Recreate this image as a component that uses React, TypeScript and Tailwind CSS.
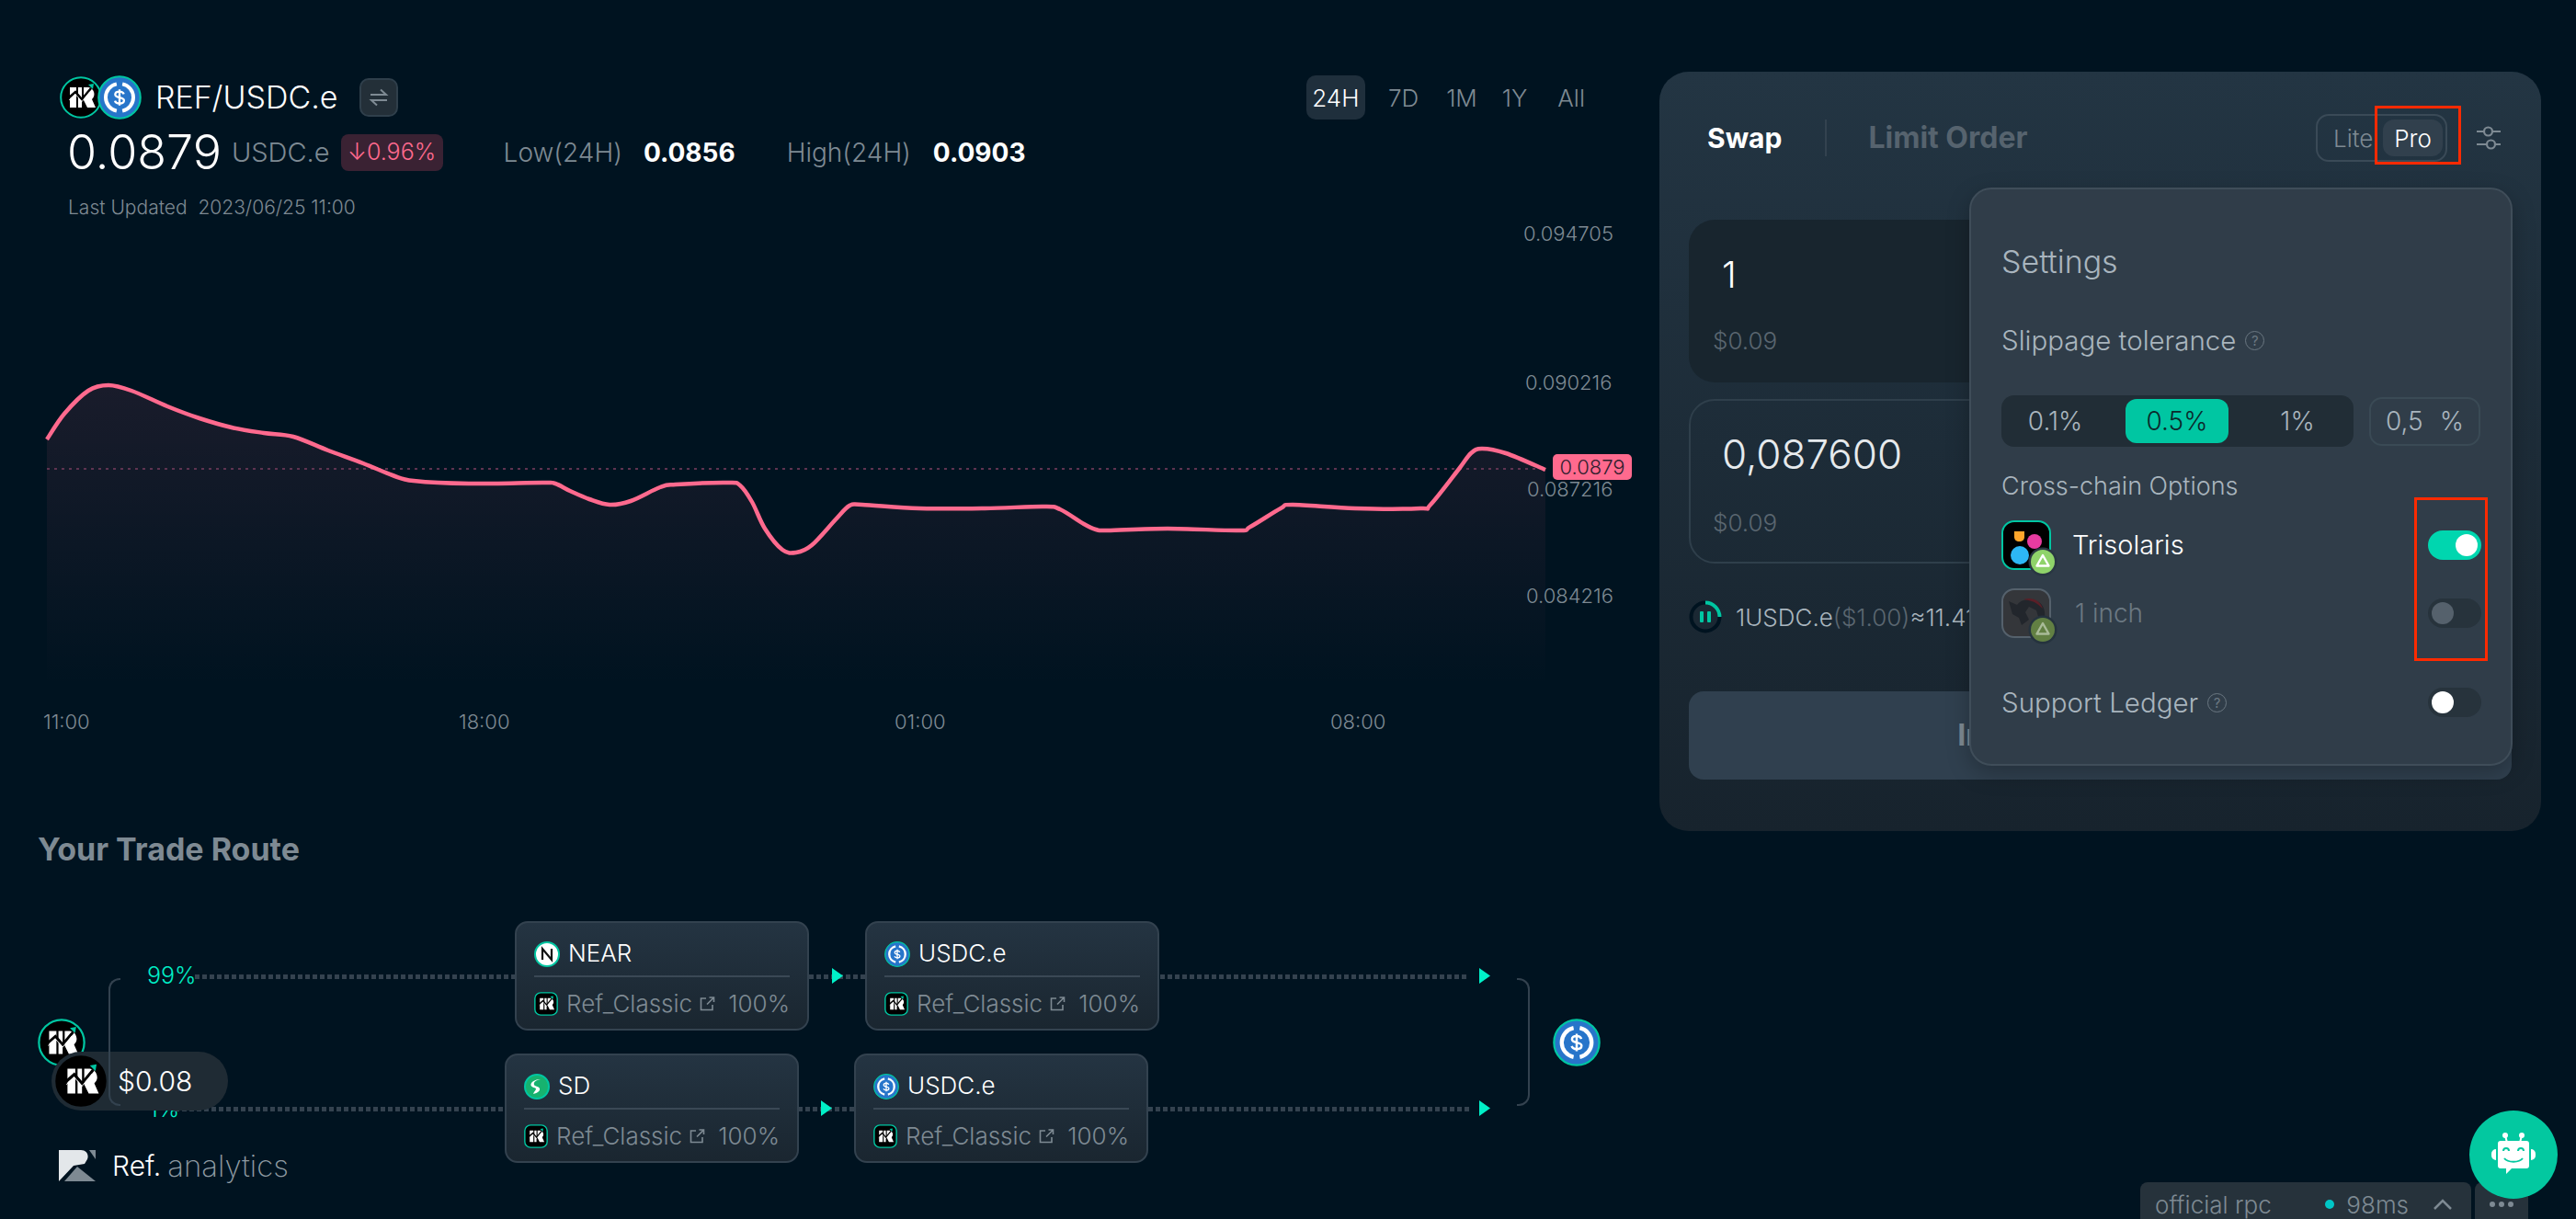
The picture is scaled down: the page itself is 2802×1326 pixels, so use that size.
import React from "react";

const pts: [number, number][] = [
  [51,478],[70,450],[96,425],[118,419],[143,425],[182,442],[217,455],[252,465],[287,471],[319,475],[357,490],[395,504],[427,517],[450,523],[510,526],[590,525],[604,526],[620,534],[641,543],[663,549],[686,545],[718,530],[735,527],[792,525],[805,528],[818,546],[832,575],[851,598],[866,601],[883,593],[909,565],[924,550],[938,549],[1000,553],[1071,553],[1135,551],[1153,554],[1179,570],[1192,576],[1205,577],[1270,575],[1347,577],[1360,573],[1393,553],[1406,549],[1474,553],[1545,553],[1556,549],[1587,510],[1600,493],[1612,488],[1638,493],[1681,511],
];
function smooth(p: [number, number][]) {
  let d = `M${p[0][0]} ${p[0][1]}`;
  for (let i = 0; i < p.length - 1; i++) {
    const a = p[Math.max(0, i - 1)], b = p[i], c = p[i + 1], e = p[Math.min(p.length - 1, i + 2)];
    const k = 1 / 6;
    d += ` C${(b[0] + (c[0] - a[0]) * k).toFixed(1)} ${(b[1] + (c[1] - a[1]) * k).toFixed(1)} ${(c[0] - (e[0] - b[0]) * k).toFixed(1)} ${(c[1] - (e[1] - b[1]) * k).toFixed(1)} ${c[0]} ${c[1]}`;
  }
  return d;
}
const linePath = smooth(pts);

function RefGlyph() {
  return (
    <>
      <path d="M11 12h7v22h-7z M20 12h4v22h-4z M26 12h5a7.5 7.5 0 0 1 4 13l4 9h-9l-4-8z" fill="#fff" />
      <path d="M8 25l9-8 7 8 10-12" fill="none" stroke="#000" strokeWidth="2.6" />
      <path d="M10 26l7-6.5 7 8 9-11" fill="none" stroke="#fff" strokeWidth="0.8" />
      <path d="M31 9l6-1-1 6z" fill="#00c6a2" />
    </>
  );
}
function RefIcon({ size, square, border = true }: { size: number; square?: boolean; border?: boolean }) {
  return (
    <svg width={size} height={size} viewBox="0 0 46 46" className="shrink-0">
      {square ? (
        <rect x="1.5" y="1.5" width="43" height="43" rx="11" fill="#000" stroke="#00c6a2" strokeWidth="2.5" />
      ) : (
        <circle cx="23" cy="23" r="21.8" fill="#000" stroke={border ? "#00c6a2" : "#000"} strokeWidth="2" />
      )}
      <RefGlyph />
    </svg>
  );
}
function UsdcIcon({ size }: { size: number }) {
  return (
    <svg width={size} height={size} viewBox="0 0 46 46" className="shrink-0">
      <circle cx="23" cy="23" r="21.8" fill="#2775ca" stroke="#00c6a2" strokeWidth="2" />
      <path d="M20 9A14.300 14.300 0 0 0 20 37M26 9A14.300 14.300 0 0 1 26 37" fill="none" stroke="#fff" strokeWidth="3.800" />
      <path d="M27.5 19.5c-.6-1.800-2.400-2.600-4.500-2.600-2.600 0-4.500 1.200-4.500 3.100 0 4.400 9.200 1.800 9.200 6.200 0 2-2 3.200-4.700 3.200-2.400 0-4.200-1-4.800-2.900 M23 14.500v17" fill="none" stroke="#fff" strokeWidth="2.200" />
    </svg>
  );
}
function NearIcon() {
  return (
    <svg width="28" height="28" viewBox="0 0 28 28" className="shrink-0">
      <circle cx="14" cy="14" r="13" fill="#fff" stroke="#00c6a2" strokeWidth="2" />
      <path d="M9 20V8l10 12V8" fill="none" stroke="#111" strokeWidth="2.200" />
    </svg>
  );
}
function SdIcon() {
  return (
    <svg width="28" height="28" viewBox="0 0 28 28" className="shrink-0">
      <circle cx="14" cy="14" r="13" fill="#17b26f" stroke="#00c6a2" strokeWidth="2" />
      <path d="M18 6c-5 1-8 3-7 6 .8 2 5 1.500 6 4 .8 2.500-2 5-7 6 1-3 3-4 3-5.500 0-1.500-5-1.500-5.500-4C7 9 12 6 18 6z" fill="#fff" />
    </svg>
  );
}
function ExtIcon() {
  return (
    <svg width="18" height="18" viewBox="0 0 18 18" fill="none" stroke="#7e8a93" strokeWidth="1.600" className="shrink-0">
      <path d="M8 3H2.500v12.500H15V10" />
      <path d="M9 9.500L16 2.500M11.500 2H16.500V7" />
    </svg>
  );
}
function HelpIcon() {
  return (
    <span className="flex h-[21px] w-[21px] items-center justify-center rounded-full border-[1.5px] border-[#6b7882] text-[15px] font-normal leading-none text-[#6b7882]">?</span>
  );
}
function Toggle({ on, muted }: { on?: boolean; muted?: boolean }) {
  return (
    <div className={`flex h-[32px] w-[58px] items-center rounded-full px-[4px] ${on ? "justify-end bg-[#00d6af]" : "justify-start bg-[#27333c]"}`}>
      <div className={`h-[24px] w-[24px] rounded-full ${muted ? "bg-[#55616c]" : "bg-white"}`} />
    </div>
  );
}
function Badge({ dim }: { dim?: boolean }) {
  return (
    <svg width="34" height="34" viewBox="0 0 34 34" className="absolute -bottom-[8px] -right-[8px]">
      <circle cx="17" cy="17" r="15.500" fill={dim ? "#25333e" : "#293742"} />
      <circle cx="17" cy="17" r="13" fill={dim ? "#628043" : "#8fd36a"} />
      <path d="M17 10l6.500 11.500h-13z" fill="none" stroke={dim ? "#a9bb98" : "#fff"} strokeWidth="2.400" strokeLinejoin="round" />
    </svg>
  );
}

function Node({ icon, name, left, top }: { icon: React.ReactNode; name: string; left: string; top: string }) {
  return (
    <div className={`absolute flex h-[119px] w-[320px] flex-col rounded-[14px] border-2 border-[#33424f] bg-gradient-to-b from-[#243442] to-[#1a2630] px-[19px] ${left} ${top}`}>
      <div className="flex h-[59px] items-end gap-[9px] border-b-2 border-[#3a4855] pb-[9px]">
        {icon}
        <span className="text-[26px] leading-[30px] text-white">{name}</span>
      </div>
      <div className="mt-[15px] flex items-center">
        <RefIcon size={26} square />
        <span className="ml-[9px] text-[26px] leading-[28px] text-[#7e8a93]">Ref_Classic</span>
        <span className="ml-auto mr-[14px]"><ExtIcon /></span>
        <span className="text-[26px] leading-[28px] text-[#7e8a93]">100%</span>
      </div>
    </div>
  );
}
function Dots({ cls }: { cls: string }) {
  return <div className={`absolute h-[5px] bg-[repeating-linear-gradient(90deg,#34424f_0_5px,transparent_5px_8px)] ${cls}`} />;
}
function Arrow({ cls }: { cls: string }) {
  return (
    <svg width="12" height="17" viewBox="0 0 12 17" className={`absolute ${cls}`}>
      <path d="M0 0l12 8.500L0 17z" fill="#00f0c8" />
    </svg>
  );
}

export default function App() {
  return (
    <div className="relative flex h-[1326px] w-[2802px] overflow-hidden bg-[#001320] font-[Inter,sans-serif] font-light">
      {/* left column */}
      <div className="flex w-[1805px] shrink-0 flex-col">
        <div className="pl-[65px] pr-[81px] pt-[82px]">
          <div className="flex h-[48px] items-center justify-between">
            <div className="flex items-center">
              <RefIcon size={46} />
              <div className="-ml-[5px]"><UsdcIcon size={48} /></div>
              <span className="ml-[15px] text-[34px] leading-none text-white">REF/USDC.e</span>
              <div className="ml-[24px] flex h-[42px] w-[42px] items-center justify-center rounded-[10px] border-2 border-[#2f3f4b] bg-[#232f38]">
                <svg width="22" height="22" viewBox="0 0 22 22" fill="none" stroke="#7e8a93" strokeWidth="2">
                  <path d="M2 8h17l-6-5.500M20 14H3l6 5.500" />
                </svg>
              </div>
            </div>
            <div className="flex items-center text-[26px] text-[#7e8a93]">
              <span className="flex h-[48px] w-[64px] items-center justify-center rounded-[10px] bg-[#1f2f3c] text-white">24H</span>
              <span className="ml-[25px]">7D</span>
              <span className="ml-[30px]">1M</span>
              <span className="ml-[27px]">1Y</span>
              <span className="ml-[33px]">All</span>
            </div>
          </div>
          <div className="mt-[16px] flex h-[40px] items-center pl-[8px]">
            <span className="text-[52px] leading-none text-white">0.0879</span>
            <span className="ml-[11px] text-[29px] text-[#7e8a93]">USDC.e</span>
            <span className="ml-[12px] flex h-[40px] w-[111px] items-center justify-center rounded-[8px] bg-[#3a2233] text-[25px] text-[#ff6a8e]">↓0.96%</span>
            <span className="ml-[66px] text-[28px] text-[#7e8a93]">Low(24H)</span>
            <span className="ml-[23px] text-[28px] font-bold text-white">0.0856</span>
            <span className="ml-[56px] text-[28px] text-[#7e8a93]">High(24H)</span>
            <span className="ml-[24px] text-[28px] font-bold text-white">0.0903</span>
          </div>
          <div className="mt-[26px] pl-[9px] text-[21px] leading-[28px] text-[#7e8a93]">Last Updated&nbsp; 2023/06/25 11:00</div>
        </div>

        {/* chart */}
        <div className="relative h-[580px] w-full">
          <svg width="1800" height="580" viewBox="0 240 1800 580" className="absolute left-0 top-0">
            <defs>
              <linearGradient id="area" x1="0" y1="0" x2="0" y2="1">
                <stop offset="0" stopColor="#ff6a8e" stopOpacity="0.1" />
                <stop offset="1" stopColor="#ff6a8e" stopOpacity="0" />
              </linearGradient>
            </defs>
            <path d={`${linePath} L1681 747 L51 747 Z`} fill="url(#area)" />
            <line x1="51" y1="510" x2="1681" y2="510" stroke="#5e3350" strokeWidth="2" strokeDasharray="3 5" />
            <path d={linePath} fill="none" stroke="#ff6a8e" strokeWidth="4.500" />
          </svg>
          <span className="absolute left-[1657px] top-[0px] text-[22px] leading-[28px] text-[#7e8a93]">0.094705</span>
          <span className="absolute left-[1659px] top-[162px] text-[22px] leading-[28px] text-[#7e8a93]">0.090216</span>
          <span className="absolute left-[1661px] top-[278px] text-[22px] leading-[28px] text-[#7e8a93]">0.087216</span>
          <span className="absolute left-[1660px] top-[394px] text-[22px] leading-[28px] text-[#7e8a93]">0.084216</span>
          <span className="absolute left-[1689px] top-[254px] flex h-[28px] w-[86px] items-center justify-center rounded-[5px] bg-[#ff6a8e] text-[22px] text-[#31202e]">0.0879</span>
          <span className="absolute left-[47px] top-[531px] text-[22px] leading-[28px] text-[#7e8a93]">11:00</span>
          <span className="absolute left-[499px] top-[531px] text-[22px] leading-[28px] text-[#7e8a93]">18:00</span>
          <span className="absolute left-[973px] top-[531px] text-[22px] leading-[28px] text-[#7e8a93]">01:00</span>
          <span className="absolute left-[1447px] top-[531px] text-[22px] leading-[28px] text-[#7e8a93]">08:00</span>
        </div>

        {/* route */}
        <div className="relative mt-[60px] flex-1">
          <div className="mt-[20px] pl-[41px] text-[34px] font-bold leading-[48px] text-[#7e8a93]">Your Trade Route</div>
          <span className="absolute left-[160px] top-[167px] text-[25px] leading-[28px] text-[#00f0c8]">99%</span>
          <span className="absolute left-[162px] top-[312px] text-[25px] leading-[28px] text-[#00f0c8]">1%</span>
          <Dots cls="left-[212px] top-[180px] w-[348px]" />
          <Dots cls="left-[880px] top-[180px] w-[61px]" />
          <Dots cls="left-[1262px] top-[180px] w-[336px]" />
          <Dots cls="left-[190px] top-[324px] w-[359px]" />
          <Dots cls="left-[868px] top-[324px] w-[61px]" />
          <Dots cls="left-[1249px] top-[324px] w-[349px]" />
          <Arrow cls="left-[905px] top-[173px]" />
          <Arrow cls="left-[1609px] top-[173px]" />
          <Arrow cls="left-[893px] top-[317px]" />
          <Arrow cls="left-[1609px] top-[317px]" />
          <Node left="left-[560px]" top="top-[122px]" icon={<NearIcon />} name="NEAR" />
          <Node left="left-[941px]" top="top-[122px]" icon={<UsdcIcon size={28} />} name="USDC.e" />
          <Node left="left-[549px]" top="top-[266px]" icon={<SdIcon />} name="SD" />
          <Node left="left-[929px]" top="top-[266px]" icon={<UsdcIcon size={28} />} name="USDC.e" />
          <div className="absolute left-[41px] top-[228px]"><RefIcon size={52} /></div>
          <div className="absolute left-[1689px] top-[228px]"><UsdcIcon size={52} /></div>
          <div className="absolute left-[1650px] top-[184px] h-[139px] w-[14px] rounded-r-[12px] border-y-2 border-r-2 border-[#33424f]" />
          {/* price pill */}
          <div className="absolute left-[56px] top-[264px] flex h-[64px] w-[192px] items-center rounded-full bg-[#1f2b34] pl-[4px]">
            <RefIcon size={56} border={false} />
            <span className="ml-[12px] text-[30px] text-white">$0.08</span>
          </div>
          <div className="absolute left-[118px] top-[184px] h-[139px] w-[13px] rounded-l-[12px] border-y-2 border-l-2 border-[#33424f]" />
          <div className="absolute left-[64px] top-[368px] flex items-center">
            <svg width="40" height="34" viewBox="0 0 40 34">
              <path d="M0 0h24c6 0 9 5 7 10l-3 5-12 2L0 34z" fill="#e3e7ea" />
              <path d="M6 34l14-16 20 16z" fill="#7e8a93" />
              <path d="M33 0h7v10z" fill="#7e8a93" />
            </svg>
            <span className="ml-[18px] text-[30px] leading-[40px] text-white">Ref.</span>
            <span className="ml-[7px] text-[33px] font-extralight leading-[40px] text-[#8f9ba3]">analytics</span>
          </div>
        </div>
      </div>

      {/* right column */}
      <div className="pt-[78px]">
        <div className="relative h-[826px] w-[959px] rounded-[32px] bg-gradient-to-b from-[#233543] to-[#17232d] px-[32px] pt-[46px]">
          <div className="flex h-[52px] items-center">
            <span className="ml-[20px] text-[30px] font-bold text-white">Swap</span>
            <span className="ml-[47px] h-[40px] w-[2px] bg-[#33424f]" />
            <span className="ml-[45px] text-[32px] font-bold text-[#56636e]">Limit Order</span>
            <div className="ml-auto flex h-[52px] w-[143px] items-center rounded-[14px] border-2 border-[#3a4a57] pl-[17px] pr-[3px]">
              <span className="text-[26px] text-[#7e8a93]">Lite</span>
              <span className="ml-auto flex h-[40px] w-[65px] items-center justify-center rounded-[12px] bg-[#31404d] text-[26px] text-white">Pro</span>
            </div>
            <svg width="28" height="26" viewBox="0 0 28 26" fill="none" stroke="#7e8a93" strokeWidth="2.200" className="ml-[31px] mr-[11px]">
              <path d="M1 6h8M18 6h9M1 20h11M21 20h6" />
              <circle cx="13.500" cy="6" r="4.500" />
              <circle cx="16.500" cy="20" r="4.500" />
            </svg>
          </div>

          <div className="mt-[63px] h-[177px] rounded-[28px] bg-[#18252e] pl-[26px] pt-[38px]">
            <div className="pl-[10px] text-[40px] leading-[44px] text-white">1</div>
            <div className="mt-[35px] text-[26px] leading-[30px] text-[#5a6670]">$0.09</div>
          </div>
          <div className="mt-[18px] h-[179px] rounded-[28px] border-2 border-[#2f3f4b] pl-[24px] pt-[33px]">
            <div className="pl-[10px] text-[44px] leading-[50px] text-[#e6eaed]">0,087600</div>
            <div className="mt-[35px] text-[26px] leading-[30px] text-[#5a6670]">$0.09</div>
          </div>
          <div className="mt-[40px] flex h-[36px] items-center text-[26px]">
            <svg width="36" height="36" viewBox="0 0 36 36" className="shrink-0">
              <circle cx="18" cy="18" r="15.500" fill="none" stroke="#001320" strokeWidth="4" />
              <path d="M18 2.500A15.500 15.500 0 0 1 33.500 18" fill="none" stroke="#00c6a2" strokeWidth="4" />
              <rect x="12" y="12" width="4" height="12" rx="1" fill="#00c6a2" />
              <rect x="20" y="12" width="4" height="12" rx="1" fill="#00c6a2" />
            </svg>
            <span className="ml-[15px] text-[#a9b5be]">1USDC.e</span>
            <span className="text-[#5a6670]">($1.00)</span>
            <span className="text-[#a9b5be]">≈11.41</span>
          </div>
          <div className="mt-[63px] flex h-[96px] items-center justify-center rounded-[16px] bg-[#30404f] text-[32px] font-bold text-[#7e8a93]">Insufficient Balance</div>

          {/* settings popup */}
          <div className="absolute left-[337px] top-[126px] h-[629px] w-[591px] rounded-[24px] border-2 border-[#3f4d59] bg-[#303d49] px-[33px] pt-[59px] shadow-[0_8px_24px_rgba(0,0,0,0.25)]">
            <div className="text-[34px] leading-[40px] text-[#a9b5be]">Settings</div>
            <div className="mt-[45px] flex h-[40px] items-center gap-[10px]">
              <span className="text-[29.5px] text-[#a9b5be]">Slippage tolerance</span>
              <HelpIcon />
            </div>
            <div className="mt-[40px] flex h-[56px] items-center">
              <div className="flex h-[56px] w-[383px] items-center rounded-[14px] bg-[#212d36] p-[4px] text-[28px] text-[#a9b5be]">
                <span className="w-[131px] pr-[22px] text-center">0.1%</span>
                <span className="flex h-[48px] w-[112px] items-center justify-center rounded-[12px] bg-[#00c6a2] text-[#0b2a2c]">0.5%</span>
                <span className="w-[132px] pl-[18px] text-center">1%</span>
              </div>
              <div className="ml-[17px] flex h-[53px] w-[121px] items-center justify-between rounded-[14px] border-2 border-[#3a4a55] px-[16px] text-[28px] text-[#a9b5be]">
                <span>0,5</span><span>%</span>
              </div>
            </div>
            <div className="mt-[23px] text-[27px] leading-[40px] text-[#a9b5be]">Cross-chain Options</div>
            <div className="mt-[17px] flex h-[54px] items-center">
              <div className="relative h-[54px] w-[54px] shrink-0">
                <svg width="54" height="54" viewBox="0 0 54 54">
                  <rect x="1" y="1" width="52" height="52" rx="13" fill="#000" stroke="#00c6a2" strokeWidth="2" />
                  <path d="M14 12h11v6c0 3-2 5-5.500 5S14 21 14 18z" fill="#ffa62b" />
                  <circle cx="36" cy="23" r="8" fill="#e83ba0" />
                  <circle cx="20" cy="38" r="10" fill="#2db7f5" />
                </svg>
                <Badge />
              </div>
              <span className="ml-[23px] text-[29px] text-white">Trisolaris</span>
              <div className="-mr-px ml-auto"><Toggle on /></div>
            </div>
            <div className="mt-[20px] flex h-[54px] items-center">
              <div className="relative h-[54px] w-[54px] shrink-0">
                <svg width="54" height="54" viewBox="0 0 54 54">
                  <rect x="1" y="1" width="52" height="52" rx="13" fill="#34363a" stroke="#55616c" strokeWidth="2" />
                  <path d="M8 14l9 4c4-6 14-8 22-4 6 3 9 9 8 17l-6 3-3-10-8-4-4 6 4 8-8 6-3-8-7-4z" fill="#22262c" />
                  <path d="M24 12c8-3 18 0 21 10l-6-5c-4-3-9-4-15-5z" fill="#5a1f27" />
                </svg>
                <Badge dim />
              </div>
              <span className="ml-[26px] text-[28px] text-[#6b7882]">1 inch</span>
              <div className="-mr-px ml-auto"><Toggle muted /></div>
            </div>
            <div className="mt-[50px] flex h-[40px] items-center gap-[10px]">
              <span className="text-[29.5px] text-[#a9b5be]">Support Ledger</span>
              <HelpIcon />
              <div className="-mr-px ml-auto"><Toggle /></div>
            </div>
          </div>

          {/* annotation rectangles */}
          <div className="absolute left-[778px] top-[37px] h-[64px] w-[94px] border-[3px] border-[#ff2a00]" />
          <div className="absolute left-[821px] top-[463px] h-[178px] w-[80px] border-[3px] border-[#ff2a00]" />
        </div>
      </div>

      {/* bottom-right widgets */}
      <div className="absolute bottom-0 left-[2328px] flex h-[40px] w-[360px] items-center rounded-t-[8px] bg-[#26323b] pl-[16px] pr-[21px] pt-[8px] text-[26px] text-[#7e8a93]">
        <span>official rpc</span>
        <span className="ml-auto h-[10px] w-[10px] rounded-full bg-[#00c6c6]" />
        <span className="ml-[13px]">98ms</span>
        <svg width="20" height="12" viewBox="0 0 20 12" fill="none" stroke="#7e8a93" strokeWidth="2.500" className="ml-[27px]">
          <path d="M1 11l9-9 9 9" />
        </svg>
      </div>
      <div className="absolute bottom-0 left-[2692px] flex h-[40px] w-[58px] items-center justify-center gap-[4px] rounded-t-[8px] bg-[#26323b] pt-[8px]">
        <span className="h-[6px] w-[6px] rounded-full bg-[#7e8a93]" />
        <span className="h-[6px] w-[6px] rounded-full bg-[#7e8a93]" />
        <span className="h-[6px] w-[6px] rounded-full bg-[#7e8a93]" />
      </div>
      <div className="absolute left-[2686px] top-[1208px] flex h-[96px] w-[96px] items-center justify-center rounded-full bg-[#03c8a0]">
        <svg width="48" height="48" viewBox="0 0 48 48">
          <circle cx="15" cy="3" r="3" fill="#fff" /><circle cx="33" cy="3" r="3" fill="#fff" />
          <path d="M15 3l2 8M33 3l-2 8" stroke="#fff" strokeWidth="2" />
          <path d="M10 9h28a3 3 0 0 1 3 3v24a3 3 0 0 1-3 3H22l-6 6v-6h-6a3 3 0 0 1-3-3V12a3 3 0 0 1 3-3z" fill="#fff" />
          <path d="M0 23a5 5 0 0 1 5-5v12a5 5 0 0 1-5-5zM48 23a5 5 0 0 0-5-5v12a5 5 0 0 0 5-5z" fill="#fff" />
          <path d="M13 20a3 3 0 0 1 6 0M29 20a3 3 0 0 1 6 0M14 28c4 5 16 5 20 0" fill="none" stroke="#03c8a0" strokeWidth="2" />
        </svg>
      </div>
    </div>
  );
}
